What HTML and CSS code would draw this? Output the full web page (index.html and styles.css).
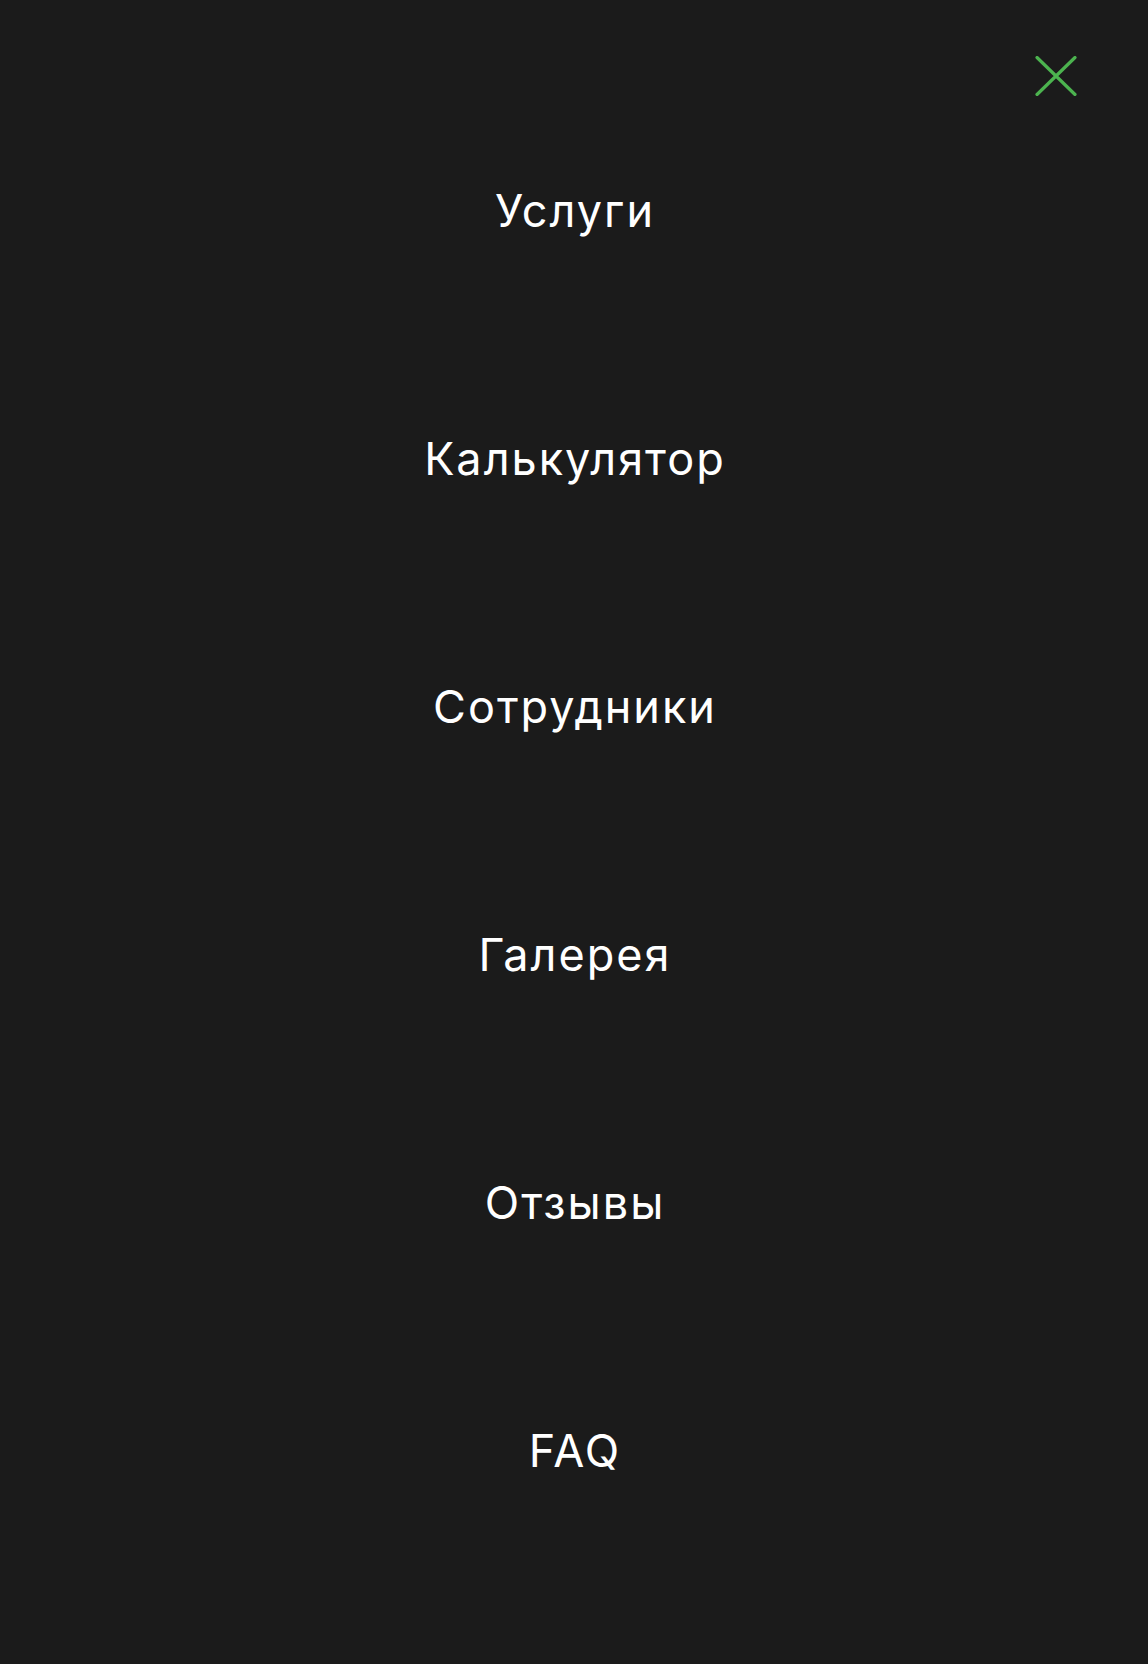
FILE: index.html
```html
<!DOCTYPE html>
<html lang="ru">
<head>
<meta charset="utf-8">
<title>Меню</title>
<link rel="stylesheet" href="styles.css">
</head>
<body>
<div class="menu">
  <header class="menu-header">
    <button class="close" aria-label="Закрыть">
      <svg width="42" height="40" viewBox="0 0 42 40"><path d="M2 1.5L40 38.5M40 1.5L2 38.5" stroke="#4cb34f" stroke-width="3.2" stroke-linecap="round" fill="none"/></svg>
    </button>
  </header>
  <nav class="menu-nav">
    <a class="menu-item" href="#">Услуги</a>
    <a class="menu-item" href="#">Калькулятор</a>
    <a class="menu-item" href="#">Сотрудники</a>
    <a class="menu-item" href="#">Галерея</a>
    <a class="menu-item" href="#">Отзывы</a>
    <a class="menu-item" href="#">FAQ</a>
  </nav>
</div>
</body>
</html>
```

FILE: styles.css
```css
html, body {
  margin: 0;
  padding: 0;
  background: #1b1b1b;
}
body {
  font-family: Inter, "Noto Sans", "Liberation Sans", sans-serif;
  color: #ffffff;
  min-height: 1664px;
}
.menu {
  display: flex;
  flex-direction: column;
}
.menu-header {
  height: 86px;
  display: flex;
  justify-content: flex-end;
  align-items: flex-start;
  padding-right: 71px;
  padding-top: 56px;
  box-sizing: border-box;
}
.close {
  background: none;
  border: 0;
  padding: 0;
  width: 42px;
  height: 40px;
  cursor: pointer;
}
.close svg { display: block; }
.menu-nav {
  display: flex;
  flex-direction: column;
}
.menu-item {
  height: 248px;
  display: flex;
  align-items: center;
  justify-content: center;
  color: #ffffff;
  text-decoration: none;
  font-size: 45px;
  font-weight: 400;
  letter-spacing: 2px;
  padding-left: 2px;
}
```
